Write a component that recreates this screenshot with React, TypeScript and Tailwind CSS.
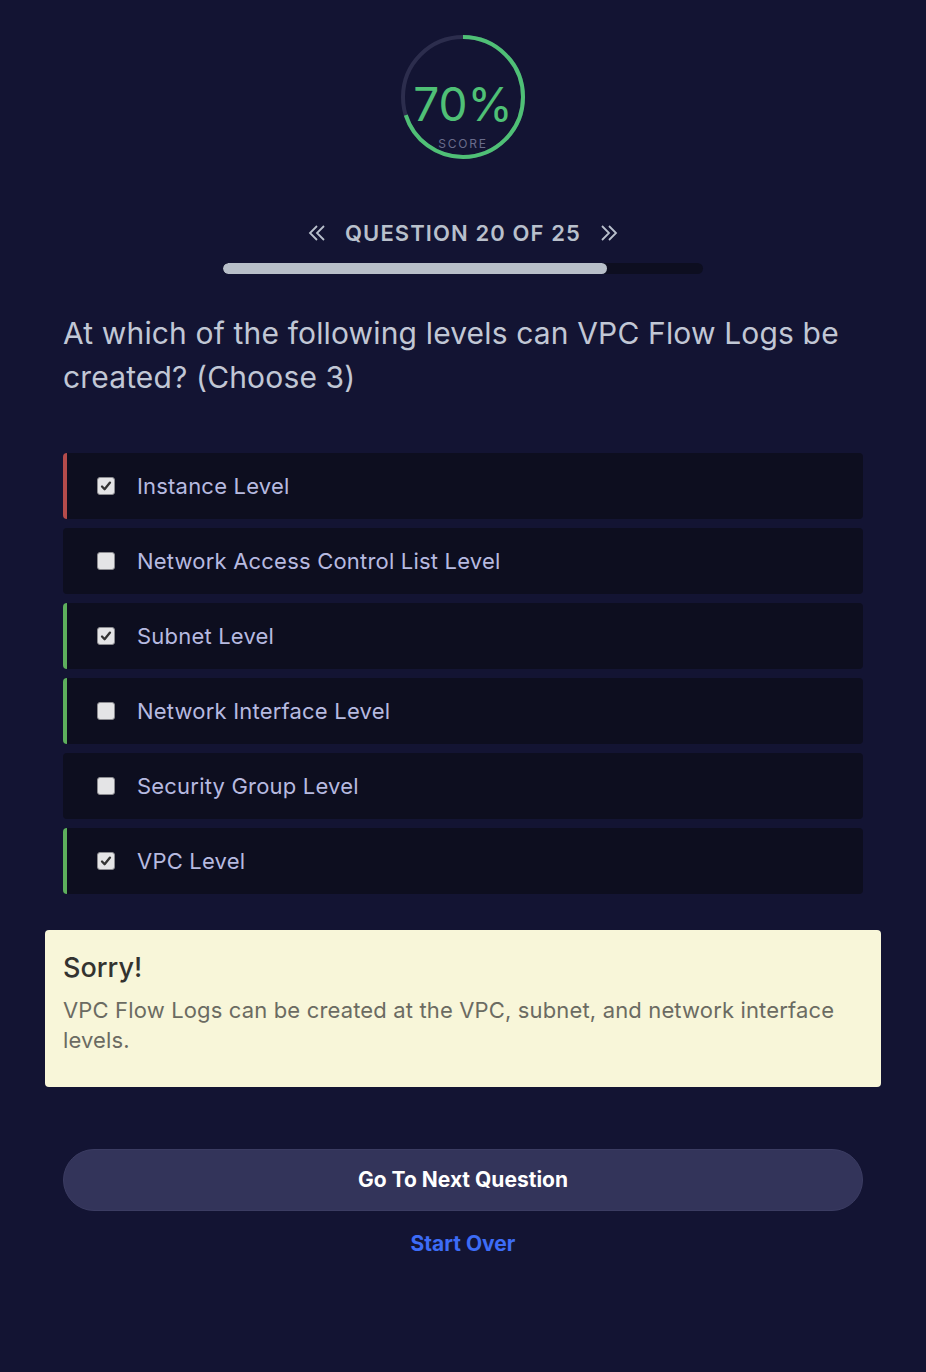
const options = [
  { label: "Instance Level", checked: true, mark: "wrong" },
  { label: "Network Access Control List Level", checked: false, mark: "none" },
  { label: "Subnet Level", checked: true, mark: "right" },
  { label: "Network Interface Level", checked: false, mark: "right" },
  { label: "Security Group Level", checked: false, mark: "none" },
  { label: "VPC Level", checked: true, mark: "right" },
];

function ScoreRing() {
  const r = 60;
  const c = 2 * Math.PI * r;
  return (
    <div className="relative w-[128px] h-[128px]">
      <svg width="128" height="128" viewBox="0 0 128 128" className="absolute inset-0">
        <circle cx="64" cy="64" r={r} fill="none" stroke="#2c2d4d" strokeWidth="4" />
        <circle
          cx="64"
          cy="64"
          r={r}
          fill="none"
          stroke="#4fc076"
          strokeWidth="4"
          strokeDasharray={`${c * 0.7} ${c}`}
          transform="rotate(-90 64 64)"
        />
      </svg>
      <div className="absolute inset-0 flex flex-col items-center">
        <div className="mt-[51px] text-[46px] leading-[40px] text-[#4fc076]" style={{ fontFamily: "Inter, sans-serif", fontWeight: 400 }}>
          70%
        </div>
        <div className="mt-[13px] text-[12px] leading-[13px] tracking-[0.15em] text-[#6a6c8c]" style={{ fontFamily: "Inter, sans-serif" }}>
          SCORE
        </div>
      </div>
    </div>
  );
}

function Check({ checked }: { checked: boolean }) {
  return (
    <span className="w-[18px] h-[18px] rounded-[3px] bg-[#e4e4e6] border border-[#8b8b90] flex items-center justify-center shrink-0">
      {checked && (
        <svg width="12" height="12" viewBox="0 0 12 12">
          <path d="M2 6.5 L4.6 9.2 L10 2.6" fill="none" stroke="#333" strokeWidth="2.3" strokeLinecap="round" strokeLinejoin="round" />
        </svg>
      )}
    </span>
  );
}

export default function App() {
  return (
    <div className="w-full min-h-[1372px] bg-[#131433] flex flex-col items-center" style={{ fontFamily: "Inter, 'Noto Sans', sans-serif" }}>
      <div className="mt-[33px]">
        <ScoreRing />
      </div>

      <div className="mt-[57px] flex items-center gap-[18px] text-[#b9c0cc]">
        <svg width="20" height="20" viewBox="0 0 20 20">
          <path d="M10 3 L3 10 L10 17 M17 3 L10 10 L17 17" fill="none" stroke="#b9c0cc" strokeWidth="1.8" />
        </svg>
        <div className="text-[22px] font-semibold tracking-[0.05em] leading-[30px]">QUESTION 20 OF 25</div>
        <svg width="20" height="20" viewBox="0 0 20 20">
          <path d="M3 3 L10 10 L3 17 M10 3 L17 10 L10 17" fill="none" stroke="#b9c0cc" strokeWidth="1.8" />
        </svg>
      </div>

      <div className="mt-[15px] w-[480px] h-[11px] rounded-full bg-[#0d0e20] overflow-hidden">
        <div className="h-full w-[80%] rounded-full bg-[#b8bfc9]" />
      </div>

      <div className="w-[800px] mt-[37px] text-[30px] leading-[44px] tracking-[0.15px] text-[#c1c7d5]">
        At which of the following levels can VPC Flow Logs be created? (Choose 3)
      </div>

      <div className="w-[800px] mt-[54px] flex flex-col gap-[9px]">
        {options.map((o) => (
          <div
            key={o.label}
            className={
              "h-[66px] rounded-[4px] bg-[#0d0e1f] flex items-center pl-[30px] gap-[22px] border-l-4 " +
              (o.mark === "wrong" ? "border-[#b44b4b]" : o.mark === "right" ? "border-[#5daf5c]" : "border-transparent")
            }
          >
            <Check checked={o.checked} />
            <span className="text-[22px] tracking-[0.2px] text-[#b7bae0]">{o.label}</span>
          </div>
        ))}
      </div>

      <div className="w-[836px] mt-[36px] rounded-[4px] bg-[#f8f6d9] px-[18px] pt-[20px] pb-[32px]">
        <div className="text-[27px] leading-[36px] text-[#333330] font-medium">Sorry!</div>
        <div className="mt-[9px] text-[22px] leading-[30px] tracking-[0.15px] text-[#6b6b62]">
          VPC Flow Logs can be created at the VPC, subnet, and network interface levels.
        </div>
      </div>

      <button className="mt-[62px] w-[800px] h-[62px] rounded-full bg-[#33345a] border border-[#3b3c62] text-white text-[21px] font-bold">
        Go To Next Question
      </button>

      <div className="mt-[18px] text-[21px] font-bold text-[#3d6cf6] leading-[30px]">Start Over</div>
    </div>
  );
}
